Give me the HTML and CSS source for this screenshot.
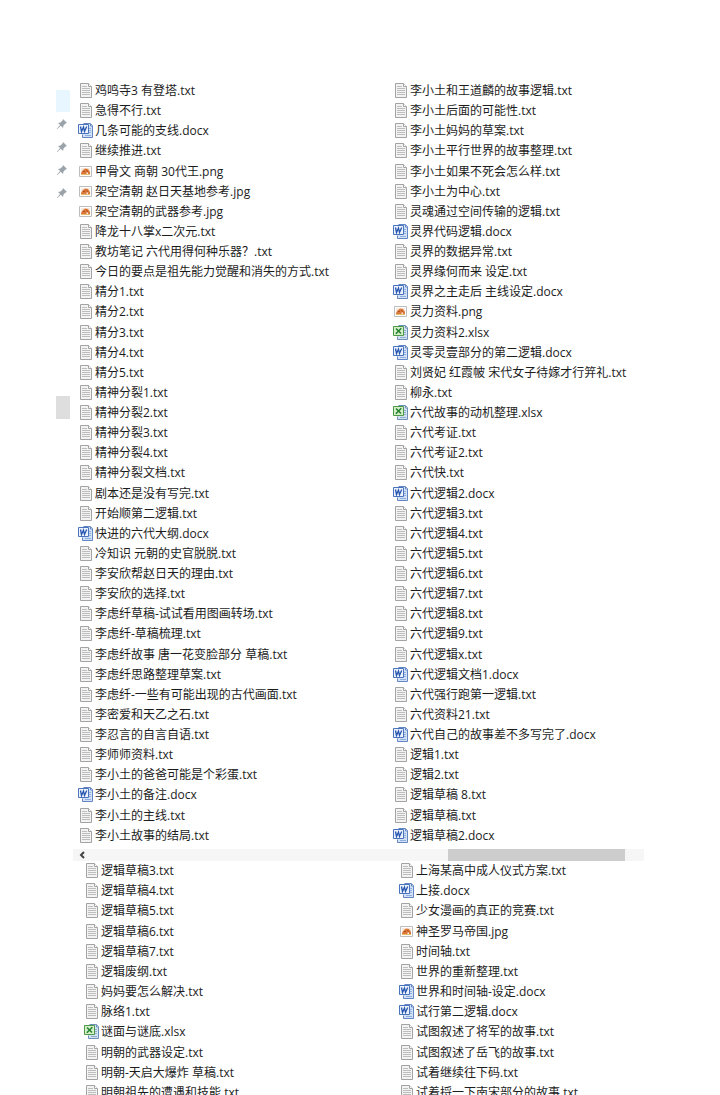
FILE: index.html
```html
<!DOCTYPE html>
<html lang="zh-CN">
  <head>
    <meta charset="UTF-8" />
    <title>文件列表</title>
    <link rel="stylesheet" href="styles.css">
  </head>
  <body>
    <!-- shared icons -->
    <svg class="sprite" aria-hidden="true">
      <symbol id="txt" viewBox="0 0 16 16">
        <path d="M2.5.5h8l3 3v11h-11z" fill="#f3f3f3" stroke="#a3a3a3" />
        <path d="M10.5.5v3h3" fill="#fff" stroke="#a3a3a3" />
        <path d="M4 3.5h5M4 5.5h8M4 7.5h8M4 9.5h8M4 11.5h8" stroke="#bdbdbd" />
      </symbol>
      <symbol id="docx" viewBox="0 0 16 16">
        <path d="M5.5.5h7l2 2v12h-10v-3" fill="#d3e2f7" stroke="#6285c4" />
        <path d="M12.5 1v2h2" fill="#fff" stroke="#6285c4" />
        <path d="M11 5.5h2M11 7.5h2M11 9.5h2M7 12.5h6" stroke="#8fadde" />
        <path d="M.5 1.500h10v9H.5z" fill="#edf3fc" stroke="#4a73bd" />
        <path d="M2.500 3.500l1 5L5.500 4l1 4.500L8.700 3.500" fill="none" stroke="#2756b0" stroke-width="1.300" />
      </symbol>
      <symbol id="xlsx" viewBox="0 0 16 16">
        <path d="M5.500.5h7l2 2v12h-10v-3" fill="#d3e2f2" stroke="#6d8fb8" />
        <path d="M12.500 1v2h2" fill="#fff" stroke="#6d8fb8" />
        <path d="M11 5.500h2M11 7.500h2M11 9.500h2M7 12.500h6" stroke="#8fadcf" />
        <path d="M.5 1.500h10v9H.5z" fill="#d5efcb" stroke="#4c9a45" />
        <path d="M3 3.500l5 5M8.300 3.300l-5.500 5.500" fill="none" stroke="#23812b" stroke-width="1.500" />
      </symbol>
      <symbol id="pic" viewBox="0 0 16 16">
        <path d="M1.500 2.500h12v10h-12z" fill="#fff" stroke="#bdbdbd" />
        <path d="M3 4h9v7H3z" fill="#fae9dd" />
        <path d="M3 9l1.500-2.500L7 4.500l3 .5 2 3v2h-2V8.500H8.500V10H3z" fill="#d9793b" />
        <path d="M5 7.500h2M8 6.500l2 1" stroke="#b65022" />
        <path d="M3 10.500h9" stroke="#e8ba6b" />
      </symbol>
      <symbol id="pin" viewBox="0 0 12 12">
        <path d="M7 1l4 4-1.500.5-2 2L7 10 4.800 7.800 1 11.200l-.3-.3L4.100 7 2 5l2.500-.5 2-2z" fill="#9aa3aa" />
      </symbol>
    </svg>

    <div class="explorer">
      <nav class="sidebar">
        <div class="side-item side-hover"></div>
        <div class="side-item"><svg class="pin"><use href="#pin" /></svg></div>
        <div class="side-item"><svg class="pin"><use href="#pin" /></svg></div>
        <div class="side-item"><svg class="pin"><use href="#pin" /></svg></div>
        <div class="side-item"><svg class="pin"><use href="#pin" /></svg></div>
        <div class="side-item side-current"></div>
      </nav>

      <main class="content">
        <section class="files">
          <ul class="file-column">
            <li><svg class="icon"><use href="#txt" /></svg>鸡鸣寺3 有登塔.txt</li>
            <li><svg class="icon"><use href="#txt" /></svg>急得不行.txt</li>
            <li><svg class="icon"><use href="#docx" /></svg>几条可能的支线.docx</li>
            <li><svg class="icon"><use href="#txt" /></svg>继续推进.txt</li>
            <li><svg class="icon"><use href="#pic" /></svg>甲骨文 商朝 30代王.png</li>
            <li><svg class="icon"><use href="#pic" /></svg>架空清朝 赵日天基地参考.jpg</li>
            <li><svg class="icon"><use href="#pic" /></svg>架空清朝的武器参考.jpg</li>
            <li><svg class="icon"><use href="#txt" /></svg>降龙十八掌x二次元.txt</li>
            <li><svg class="icon"><use href="#txt" /></svg>教坊笔记 六代用得何种乐器？.txt</li>
            <li><svg class="icon"><use href="#txt" /></svg>今日的要点是祖先能力觉醒和消失的方式.txt</li>
            <li><svg class="icon"><use href="#txt" /></svg>精分1.txt</li>
            <li><svg class="icon"><use href="#txt" /></svg>精分2.txt</li>
            <li><svg class="icon"><use href="#txt" /></svg>精分3.txt</li>
            <li><svg class="icon"><use href="#txt" /></svg>精分4.txt</li>
            <li><svg class="icon"><use href="#txt" /></svg>精分5.txt</li>
            <li><svg class="icon"><use href="#txt" /></svg>精神分裂1.txt</li>
            <li><svg class="icon"><use href="#txt" /></svg>精神分裂2.txt</li>
            <li><svg class="icon"><use href="#txt" /></svg>精神分裂3.txt</li>
            <li><svg class="icon"><use href="#txt" /></svg>精神分裂4.txt</li>
            <li><svg class="icon"><use href="#txt" /></svg>精神分裂文档.txt</li>
            <li><svg class="icon"><use href="#txt" /></svg>剧本还是没有写完.txt</li>
            <li><svg class="icon"><use href="#txt" /></svg>开始顺第二逻辑.txt</li>
            <li><svg class="icon"><use href="#docx" /></svg>快进的六代大纲.docx</li>
            <li><svg class="icon"><use href="#txt" /></svg>冷知识 元朝的史官脱脱.txt</li>
            <li><svg class="icon"><use href="#txt" /></svg>李安欣帮赵日天的理由.txt</li>
            <li><svg class="icon"><use href="#txt" /></svg>李安欣的选择.txt</li>
            <li><svg class="icon"><use href="#txt" /></svg>李虑纤草稿-试试看用图画转场.txt</li>
            <li><svg class="icon"><use href="#txt" /></svg>李虑纤-草稿梳理.txt</li>
            <li><svg class="icon"><use href="#txt" /></svg>李虑纤故事 唐一花变脸部分 草稿.txt</li>
            <li><svg class="icon"><use href="#txt" /></svg>李虑纤思路整理草案.txt</li>
            <li><svg class="icon"><use href="#txt" /></svg>李虑纤-一些有可能出现的古代画面.txt</li>
            <li><svg class="icon"><use href="#txt" /></svg>李密爱和天乙之石.txt</li>
            <li><svg class="icon"><use href="#txt" /></svg>李忍言的自言自语.txt</li>
            <li><svg class="icon"><use href="#txt" /></svg>李师师资料.txt</li>
            <li><svg class="icon"><use href="#txt" /></svg>李小土的爸爸可能是个彩蛋.txt</li>
            <li><svg class="icon"><use href="#docx" /></svg>李小土的备注.docx</li>
            <li><svg class="icon"><use href="#txt" /></svg>李小土的主线.txt</li>
            <li><svg class="icon"><use href="#txt" /></svg>李小土故事的结局.txt</li>
          </ul>
          <ul class="file-column">
            <li><svg class="icon"><use href="#txt" /></svg>李小土和王道麟的故事逻辑.txt</li>
            <li><svg class="icon"><use href="#txt" /></svg>李小土后面的可能性.txt</li>
            <li><svg class="icon"><use href="#txt" /></svg>李小土妈妈的草案.txt</li>
            <li><svg class="icon"><use href="#txt" /></svg>李小土平行世界的故事整理.txt</li>
            <li><svg class="icon"><use href="#txt" /></svg>李小土如果不死会怎么样.txt</li>
            <li><svg class="icon"><use href="#txt" /></svg>李小土为中心.txt</li>
            <li><svg class="icon"><use href="#txt" /></svg>灵魂通过空间传输的逻辑.txt</li>
            <li><svg class="icon"><use href="#docx" /></svg>灵界代码逻辑.docx</li>
            <li><svg class="icon"><use href="#txt" /></svg>灵界的数据异常.txt</li>
            <li><svg class="icon"><use href="#txt" /></svg>灵界缘何而来 设定.txt</li>
            <li><svg class="icon"><use href="#docx" /></svg>灵界之主走后 主线设定.docx</li>
            <li><svg class="icon"><use href="#pic" /></svg>灵力资料.png</li>
            <li><svg class="icon"><use href="#xlsx" /></svg>灵力资料2.xlsx</li>
            <li><svg class="icon"><use href="#docx" /></svg>灵零灵壹部分的第二逻辑.docx</li>
            <li><svg class="icon"><use href="#txt" /></svg>刘贤妃 红霞帔 宋代女子待嫁才行笄礼.txt</li>
            <li><svg class="icon"><use href="#txt" /></svg>柳永.txt</li>
            <li><svg class="icon"><use href="#xlsx" /></svg>六代故事的动机整理.xlsx</li>
            <li><svg class="icon"><use href="#txt" /></svg>六代考证.txt</li>
            <li><svg class="icon"><use href="#txt" /></svg>六代考证2.txt</li>
            <li><svg class="icon"><use href="#txt" /></svg>六代快.txt</li>
            <li><svg class="icon"><use href="#docx" /></svg>六代逻辑2.docx</li>
            <li><svg class="icon"><use href="#txt" /></svg>六代逻辑3.txt</li>
            <li><svg class="icon"><use href="#txt" /></svg>六代逻辑4.txt</li>
            <li><svg class="icon"><use href="#txt" /></svg>六代逻辑5.txt</li>
            <li><svg class="icon"><use href="#txt" /></svg>六代逻辑6.txt</li>
            <li><svg class="icon"><use href="#txt" /></svg>六代逻辑7.txt</li>
            <li><svg class="icon"><use href="#txt" /></svg>六代逻辑8.txt</li>
            <li><svg class="icon"><use href="#txt" /></svg>六代逻辑9.txt</li>
            <li><svg class="icon"><use href="#txt" /></svg>六代逻辑x.txt</li>
            <li><svg class="icon"><use href="#docx" /></svg>六代逻辑文档1.docx</li>
            <li><svg class="icon"><use href="#txt" /></svg>六代强行跑第一逻辑.txt</li>
            <li><svg class="icon"><use href="#txt" /></svg>六代资料21.txt</li>
            <li><svg class="icon"><use href="#docx" /></svg>六代自己的故事差不多写完了.docx</li>
            <li><svg class="icon"><use href="#txt" /></svg>逻辑1.txt</li>
            <li><svg class="icon"><use href="#txt" /></svg>逻辑2.txt</li>
            <li><svg class="icon"><use href="#txt" /></svg>逻辑草稿 8.txt</li>
            <li><svg class="icon"><use href="#txt" /></svg>逻辑草稿.txt</li>
            <li><svg class="icon"><use href="#docx" /></svg>逻辑草稿2.docx</li>
          </ul>
        </section>

        <div class="scrollbar">
          <button class="scroll-left" aria-label="向左滚动">
            <svg class="chevron" viewBox="0 0 6 8"><path d="M5 1L2 4l3 3" fill="none" stroke="#444" stroke-width="2" /></svg>
          </button>
          <div class="scroll-thumb"></div>
        </div>

        <section class="files files-next">
          <ul class="file-column">
            <li><svg class="icon"><use href="#txt" /></svg>逻辑草稿3.txt</li>
            <li><svg class="icon"><use href="#txt" /></svg>逻辑草稿4.txt</li>
            <li><svg class="icon"><use href="#txt" /></svg>逻辑草稿5.txt</li>
            <li><svg class="icon"><use href="#txt" /></svg>逻辑草稿6.txt</li>
            <li><svg class="icon"><use href="#txt" /></svg>逻辑草稿7.txt</li>
            <li><svg class="icon"><use href="#txt" /></svg>逻辑废纲.txt</li>
            <li><svg class="icon"><use href="#txt" /></svg>妈妈要怎么解决.txt</li>
            <li><svg class="icon"><use href="#txt" /></svg>脉络1.txt</li>
            <li><svg class="icon"><use href="#xlsx" /></svg>谜面与谜底.xlsx</li>
            <li><svg class="icon"><use href="#txt" /></svg>明朝的武器设定.txt</li>
            <li><svg class="icon"><use href="#txt" /></svg>明朝-天启大爆炸 草稿.txt</li>
            <li><svg class="icon"><use href="#txt" /></svg>明朝祖先的遭遇和技能.txt</li>
          </ul>
          <ul class="file-column">
            <li><svg class="icon"><use href="#txt" /></svg>上海某高中成人仪式方案.txt</li>
            <li><svg class="icon"><use href="#docx" /></svg>上接.docx</li>
            <li><svg class="icon"><use href="#txt" /></svg>少女漫画的真正的竞赛.txt</li>
            <li><svg class="icon"><use href="#pic" /></svg>神圣罗马帝国.jpg</li>
            <li><svg class="icon"><use href="#txt" /></svg>时间轴.txt</li>
            <li><svg class="icon"><use href="#txt" /></svg>世界的重新整理.txt</li>
            <li><svg class="icon"><use href="#docx" /></svg>世界和时间轴-设定.docx</li>
            <li><svg class="icon"><use href="#docx" /></svg>试行第二逻辑.docx</li>
            <li><svg class="icon"><use href="#txt" /></svg>试图叙述了将军的故事.txt</li>
            <li><svg class="icon"><use href="#txt" /></svg>试图叙述了岳飞的故事.txt</li>
            <li><svg class="icon"><use href="#txt" /></svg>试着继续往下码.txt</li>
            <li><svg class="icon"><use href="#txt" /></svg>试着捋一下南宋部分的故事.txt</li>
          </ul>
        </section>
      </main>
    </div>
  </body>
</html>
```
FILE: styles.css
```css
:root {
  --text: #1c1c1c;
  --hover: #e8f7ff;
  --current: #dedede;
  --track: #f6f6f6;
  --thumb: #cdcdcd;
}

* {
  margin: 0;
  padding: 0;
  box-sizing: border-box;
}

body {
  height: 100vh;
  overflow: hidden;
  background: white;
  color: var(--text);
  font-family: "Open Sans", "Noto Sans CJK SC", sans-serif;
  font-size: 12px;
  line-height: 20px;
}

.sprite {
  display: none;
}

.explorer {
  display: flex;
  padding: 81px 0 0 56px;
}

.sidebar {
  flex: 0 0 14px;
  padding-top: 9px;
}

.side-item {
  display: flex;
  align-items: center;
  height: 23px;
}

.side-hover {
  height: 22px;
  background: var(--hover);
}

.side-current {
  margin-top: 192px;
  background: var(--current);
}

.pin {
  width: 12px;
  height: 12px;
}

.content {
  flex: 1;
  min-width: 0;
}

.files {
  display: grid;
  grid-template-columns: 1fr 1fr;
  min-height: 765px;
  padding: 0 12px 0 8px;
}

.files-next {
  min-height: 242px;
  padding: 0 6px 0 14px;
}

.file-column {
  display: flex;
  flex-direction: column;
  justify-content: space-between;
  list-style: none;
}

.file-column li {
  display: flex;
  align-items: center;
  gap: 1px;
  height: 20px;
  white-space: pre;
}

.icon {
  flex: none;
  width: 16px;
  height: 16px;
}

.scrollbar {
  display: flex;
  height: 12px;
  margin: 3px 76px 0 3px;
  background: var(--track);
}

.scroll-left {
  display: flex;
  align-items: center;
  justify-content: center;
  width: 18px;
  border: none;
  background: none;
}

.chevron {
  width: 6px;
  height: 8px;
}

.scroll-thumb {
  width: 31%;
  margin: 0 19px 0 auto;
  background: var(--thumb);
}
```
